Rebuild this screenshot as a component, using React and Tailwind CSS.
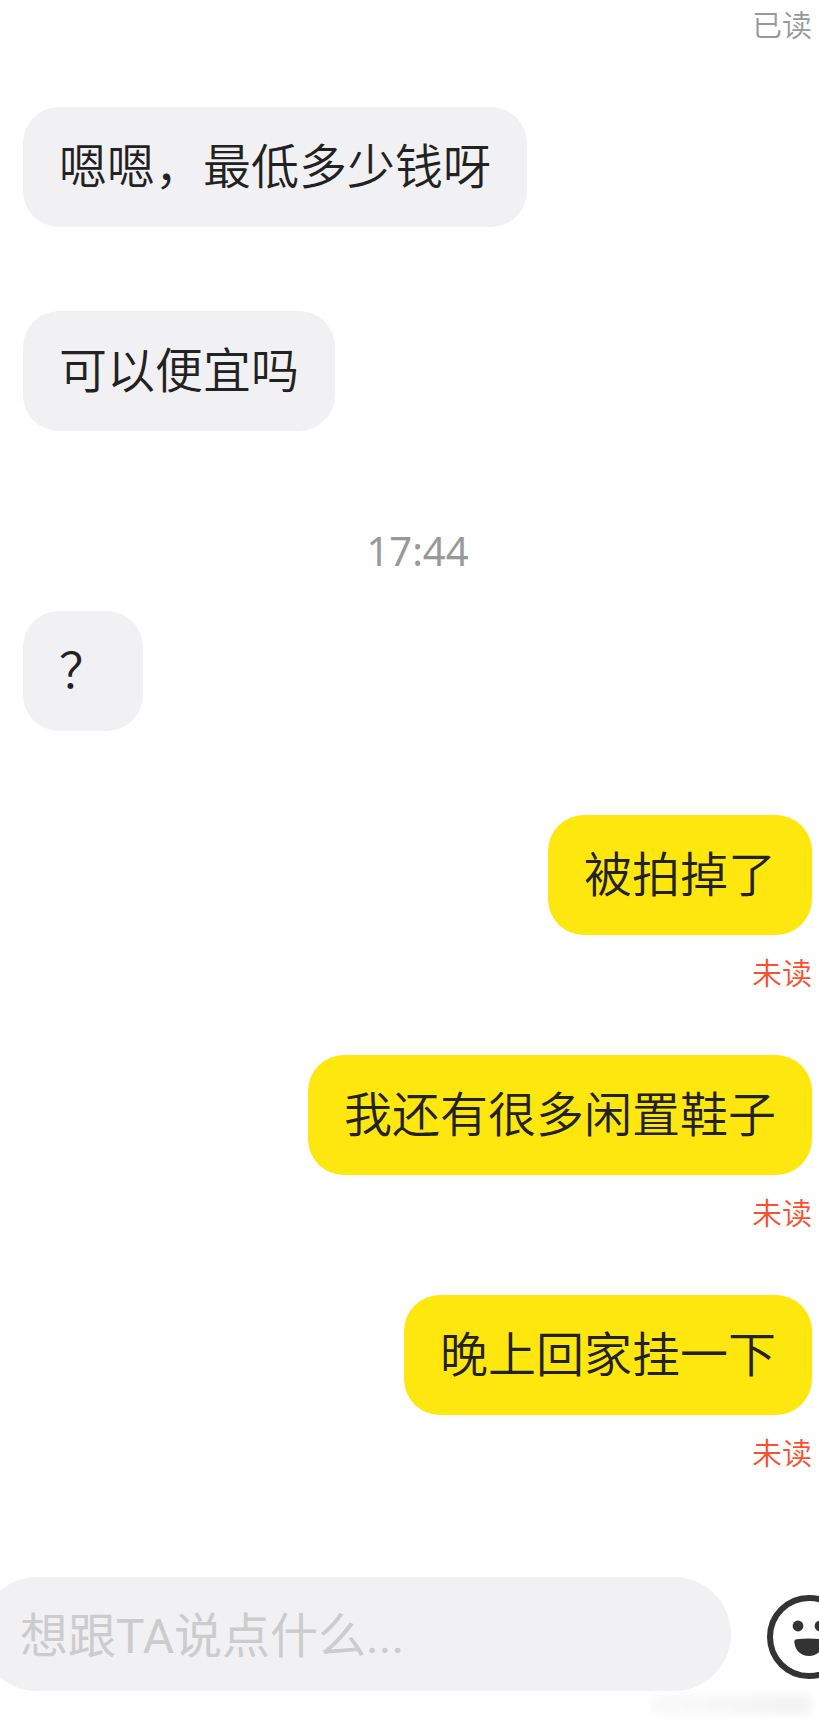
import React, { useState } from 'react';

const messages = [
  { id: 1, type: 'received', text: '嗯嗯，最低多少钱呀' },
  { id: 2, type: 'received', text: '可以便宜吗' },
  { id: 3, type: 'time', text: '17:44' },
  { id: 4, type: 'received', text: '？' },
  { id: 5, type: 'sent', text: '被拍掉了', status: '未读' },
  { id: 6, type: 'sent', text: '我还有很多闲置鞋子', status: '未读' },
  { id: 7, type: 'sent', text: '晚上回家挂一下', status: '未读' },
];

const SmileIcon = () => (
  <svg className="size-21" viewBox="0 0 84 84" fill="none" aria-hidden="true">
    <circle cx="42" cy="42" r="39" stroke="#333333" strokeWidth="6" />
    <circle cx="31" cy="31" r="5.4" fill="#333333" />
    <circle cx="53" cy="31" r="5.4" fill="#333333" />
    <path
      d="M29.500 44.300 Q42 42.700 54.500 44.300 Q57 44.500 56.700 47 C56 55.500 50 61 42 61 C34 61 28 55.500 27.300 47 Q27 44.500 29.500 44.300 Z"
      fill="#333333"
    />
  </svg>
);

const Message = ({ message }) => {
  if (message.type === 'time') {
    return (
      <div className="mt-4 -mb-11 text-center font-['Noto_Sans'] text-[40px] leading-10 font-normal text-[#999999]">
        {message.text}
      </div>
    );
  }

  if (message.type === 'sent') {
    return (
      <div className="-mb-5 flex flex-col items-end">
        <p className="rounded-[36px] bg-[#fee60f] px-9 pt-5 pb-7 text-5xl leading-[72px] text-[#222222]">
          {message.text}
        </p>
        <span className="mt-4 text-3xl leading-10 text-[#f9502f]">{message.status}</span>
      </div>
    );
  }

  return (
    <p className="self-start rounded-[36px] bg-[#f1f1f3] px-9 pt-5 pb-7 text-5xl leading-[72px] text-[#222222]">
      {message.text}
    </p>
  );
};

export default function App() {
  const [input, setInput] = useState('');

  return (
    <div className="relative flex min-h-screen flex-col overflow-hidden bg-white font-['Noto_Sans_CJK_SC',sans-serif] font-[350]">
      {/* Messages */}
      <main className="flex flex-1 flex-col gap-[84px] pt-[3px] pr-[7px] pl-[23px]">
        <div className="-mb-5 text-right text-3xl leading-10 text-[#999999]">已读</div>
        {messages.map((message) => (
          <Message key={message.id} message={message} />
        ))}
      </main>

      {/* Input */}
      <form
        onSubmit={(e) => e.preventDefault()}
        className="-mr-8 -ml-5 flex items-center gap-9 pt-[126px] pb-9"
      >
        <input
          type="text"
          value={input}
          onChange={(e) => setInput(e.target.value)}
          placeholder="想跟TA说点什么..."
          aria-label="想跟TA说点什么"
          className="h-[114px] min-w-0 flex-1 rounded-full bg-[#f1f1f3] px-10 pt-1 font-['Roboto','Noto_Sans_CJK_SC',sans-serif] text-5xl font-normal text-[#222222] outline-none placeholder:text-[#cccccc]"
        />
        <button type="button" aria-label="表情" className="mt-1.5 shrink-0">
          <SmileIcon />
        </button>
      </form>

      {/* Faint smudge under the input bar */}
      <div className="pointer-events-none absolute right-2 bottom-3 h-5 w-40 bg-linear-to-r from-[#fafafa] to-[#f3f3f3] blur-xs" />
    </div>
  );
}
